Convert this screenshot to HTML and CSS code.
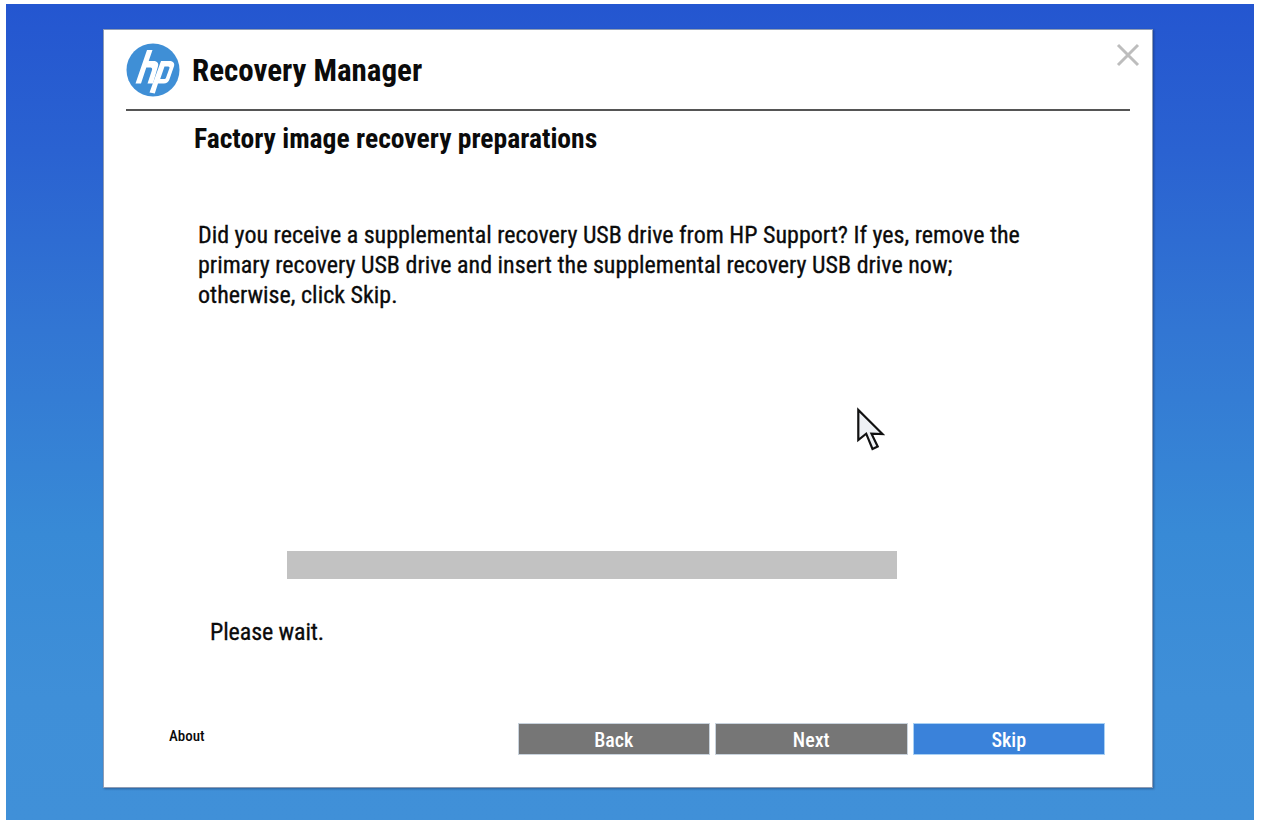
FILE: index.html
```html
<!DOCTYPE html>
<html lang="en">
<head>
<meta charset="utf-8">
<title>Recovery Manager</title>
<link rel="stylesheet" href="styles.css">
</head>
<body>
<main class="desktop">
  <section class="dialog">
    <header class="head">
      <svg class="logo" viewBox="0 0 54 54" aria-label="HP">
        <circle cx="27" cy="27" r="26.500" fill="#3f8fd6"/>
        <path fill="#fff" d="M21 7h5.500L22.700 18h4.800c4 0 5.500 2.500 4.400 5.600L27 40.500h-5.500L26 27c.5-1.400-.2-2.500-1.500-2.500h-4.200L15 40.500H9.500z"/>
        <path fill="#fff" fill-rule="evenodd" d="M35 18h8.500c4 0 5.500 2.500 4.400 5.600l-4.500 13c-1 2.700-3 3.900-5.500 3.900h-5.900l-3.200 10-5.300-1zM38.500 23.500L34.200 36h3.800c1 0 1.800-.5 2.100-1.500l3.300-9.200c.4-1.100-.2-1.800-1.200-1.800z"/>
      </svg>
      <h1 class="app-title">Recovery Manager</h1>
      <button class="close" aria-label="Close">
        <svg viewBox="0 0 24 24"><path d="M2 2L22 22M22 2L2 22"/></svg>
      </button>
    </header>
    <hr class="rule">
    <h2 class="page-title">Factory image recovery preparations</h2>
    <p class="message">Did you receive a supplemental recovery USB drive from HP Support? If yes, remove the<br>primary recovery USB drive and insert the supplemental recovery USB drive now;<br>otherwise, click Skip.</p>
    <div class="progress"></div>
    <p class="status">Please wait.</p>
    <footer class="foot">
      <a class="about">About</a>
      <div class="buttons">
        <button class="btn">Back</button>
        <button class="btn">Next</button>
        <button class="btn primary">Skip</button>
      </div>
    </footer>
  </section>
  <svg class="cursor" viewBox="0 0 32 46"><path d="M3.300 3V33L11.200 26.700L17.500 42L22.700 39.500L16.500 26.700L27.500 27Z"/></svg>
</main>
</body>
</html>
```
FILE: styles.css
```css
* { box-sizing: border-box; }
html, body { margin: 0; height: 100%; background: #fff; }
body { padding: 4px 8px 0 6px; overflow: hidden; }
.desktop {
  position: relative;
  height: 816px;
  padding: 25px 101px 0 97px;
  background: linear-gradient(180deg, #2456d0 0%, #2a62d1 18%, #3276d3 40%, #388ad6 65%, #3f8fd8 85%, #4090d8 100%);
}
.dialog {
  height: 759px;
  background: #fff;
  border: 1px solid #8f9db5;
  box-shadow: 1px 1px 2px rgba(20, 40, 80, .45);
  padding: 0 22px 0 22px;
  font-family: "Liberation Sans Narrow", "Roboto Condensed", "Noto Sans", sans-serif;
  color: #0b0b0b;
}
.head { display: flex; align-items: center; height: 79px; padding-top: 1px; }
.logo { width: 54px; height: 54px; flex: none; }
.app-title { margin: 0 0 0 12px; font-size: 31px; font-weight: 700; }
.close { margin: -31px -10px 0 auto; width: 24px; height: 24px; padding: 0; background: none; border: 0; }
.close svg { display: block; width: 24px; height: 24px; fill: none; stroke: #bdbdbd; stroke-width: 3; }
.rule { margin: 0; border: 0; border-top: 2px solid #555; }
.page-title { margin: 11px 0 0 68px; font-size: 27.600px; line-height: 34px; font-weight: 700; }
.message { margin: 64px 0 0 72px; font-size: 24px; line-height: 30px; font-weight: 400; -webkit-text-stroke: .3px #0b0b0b; }
.progress { margin: 241px 0 0 161px; width: 610px; height: 28px; background: #c2c2c2; }
.status { margin: 37px 0 0 84px; font-size: 24px; line-height: 32px; font-weight: 400; letter-spacing: -.1px; -webkit-text-stroke: .3px #0b0b0b; }
.foot { display: flex; align-items: flex-start; margin-top: 75px; }
.about { margin: 3px 0 0 43px; font-size: 15px; font-weight: 500; line-height: 20px; }
.buttons { display: flex; gap: 5px; margin-left: auto; margin-right: 25px; }
.btn { width: 192.500px; height: 32px; padding: 2px 0 0; border: 1px solid #c8d2dc; background: #767676; color: #fff; font: 500 20px "Liberation Sans Narrow", "Roboto Condensed", sans-serif; }
.btn.primary { background: #3a82da; border-color: #a8d0f4; }
.cursor { position: absolute; left: 849px; top: 403px; width: 32px; height: 46px; }
.cursor path { fill: #eef1f5; stroke: #111; stroke-width: 2.200; stroke-linejoin: miter; }
```
